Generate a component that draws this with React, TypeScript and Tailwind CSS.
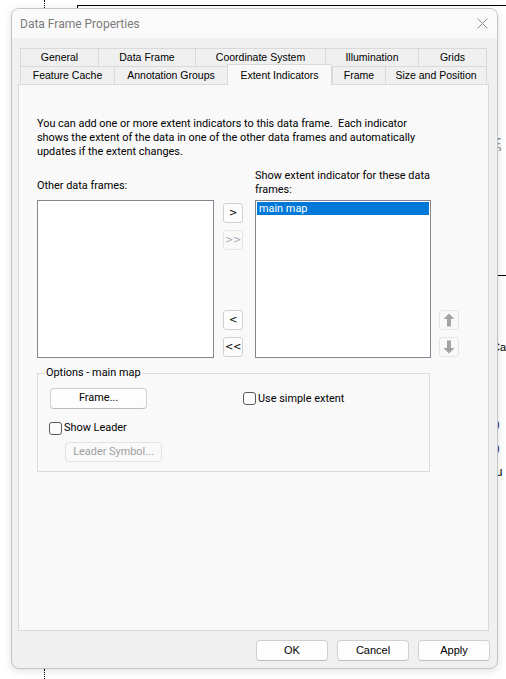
import React from "react";

const ui = "font-['Roboto',sans-serif] text-[10.9px]";
const ms = "font-['Liberation_Sans',Arial,sans-serif] text-[10.5px]";
const msb = "font-['Liberation_Sans',Arial,sans-serif] text-[11px]";

function Tab({ label, w, selected }: { label: string; w: number; selected?: boolean }) {
  if (selected) {
    return (
      <div
        className={`relative z-10 -mt-[2px] h-[21px] flex items-start justify-center pt-[3px] border-l border-r border-t border-[#d9d9d9] bg-[#f9f9f9] text-black ${ms}`}
        style={{ width: w }}
      >
        {label}
      </div>
    );
  }
  return (
    <div
      className={`h-[18px] flex items-center justify-center border-l border-t border-[#d9d9d9] bg-[#f0f0f0] text-black ${ms}`}
      style={{ width: w }}
    >
      {label}
    </div>
  );
}

function SmallBtn({ label, disabled }: { label: string; disabled?: boolean }) {
  return (
    <div
      className={`w-[20px] h-[20px] rounded-[3px] border flex items-center justify-center font-['DejaVu_Sans',sans-serif] text-[10px] ${
        disabled ? "border-[#e6e6e6] bg-[#f9f9f9] text-[#a8a8b8]" : "border-[#d0d0d0] bg-[#fdfdfd] text-black"
      }`}
    >
      <span className="leading-none -mt-[1px] tracking-[-0.5px]">{label}</span>
    </div>
  );
}

function ArrowBtn({ down }: { down?: boolean }) {
  return (
    <div className="w-[20px] h-[20px] rounded-[3px] border border-[#e6e6e6] bg-[#f9f9f9] flex items-center justify-center">
      <svg width="12" height="14" viewBox="0 0 12 14" className={down ? "rotate-180" : ""}>
        <path d="M6 0.5 L11.5 6 L8 6 L8 13.5 L4 13.5 L4 6 L0.5 6 Z" fill="#a3a3a3" />
      </svg>
    </div>
  );
}

function Check({ label }: { label: string }) {
  return (
    <div className="flex items-center gap-[2px]">
      <div className="w-[13px] h-[13px] rounded-[3px] border border-[#5a5a5a] bg-[#fbfbfb]" />
      <span className={`${ui} text-black leading-[14px]`}>{label}</span>
    </div>
  );
}

function PushBtn({ label, w, h, disabled, font }: { label: string; w: number; h: number; disabled?: boolean; font?: string }) {
  return (
    <div
      className={`rounded-[4px] border flex items-center justify-center ${font ?? ui} ${
        disabled
          ? "border-[#e3e3e3] bg-[#f9f9f9] text-[#a0a0a0]"
          : "border-[#d0d0d0] border-b-[#bcbcbc] bg-[#fdfdfd] text-black"
      }`}
      style={{ width: w, height: h }}
    >
      {label}
    </div>
  );
}

export default function App() {
  return (
    <div className="relative w-[506px] h-[679px] bg-white overflow-hidden pt-[8px] pl-[11px]">
      {/* background canvas fragments */}
      <div className="absolute left-[44px] top-0 h-[10px] border-l border-dotted border-black" />
      <div className="absolute left-[44px] top-[669px] h-[10px] border-l border-dotted border-black" />
      <div className="absolute left-[77px] top-[5px] w-[429px] h-[6px] border-l border-t border-black" />
      <div className="absolute left-[495px] top-[137px] text-[#8a8a8a] font-['DejaVu_Sans',sans-serif] text-[12px] leading-[14px]">ξ</div>
      <div className="absolute left-[490px] top-[275px] w-[16px] border-t border-black" />
      <div className="absolute left-[492px] top-[340px] text-black font-['Liberation_Sans',sans-serif] text-[11px] leading-[14px]">Ca</div>
      <div className="absolute left-[496px] top-[418px] text-[#1a1a3a] font-['Liberation_Sans',sans-serif] text-[11px] leading-[12px]">)</div>
      <div className="absolute left-[496px] top-[442px] text-[#1a1a3a] font-['Liberation_Sans',sans-serif] text-[11px] leading-[12px]">)</div>
      <div className="absolute left-[493px] top-[465px] text-black font-['Liberation_Sans',sans-serif] text-[12px] leading-[14px]">iu</div>

      {/* dialog window */}
      <div className="relative z-10 w-[487px] h-[661px] rounded-[8px] border border-[#c4c4c4] bg-[#f0f0f0] shadow-[0_2px_8px_rgba(0,0,0,0.12)] overflow-hidden flex flex-col">
        <div className="h-[29px] bg-[#fafafa] flex items-center justify-between pl-[8px] pr-[9px] shrink-0">
          <span className="font-['Roboto',sans-serif] text-[12px] text-[#7c7c7c]">Data Frame Properties</span>
          <svg width="11" height="11" viewBox="0 0 11 11">
            <path d="M0.5 0.5 L10.5 10.5 M10.5 0.5 L0.5 10.5" stroke="#8c8c8c" strokeWidth="1" />
          </svg>
        </div>
        <div className="flex-1 flex flex-col pl-[6px] pt-[10px]">
          {/* tabs */}
          <div className="ml-[2px] flex flex-col">
            <div className="flex">
              <Tab label="General" w={78} />
              <Tab label="Data Frame" w={97} />
              <Tab label="Coordinate System" w={130} />
              <Tab label="Illumination" w={93} />
              <div className="border-r border-[#d9d9d9]">
                <Tab label="Grids" w={68} />
              </div>
            </div>
            <div className="flex h-[18px]">
              <Tab label="Feature Cache" w={94} />
              <Tab label="Annotation Groups" w={113} />
              <Tab label="Extent Indicators" w={105} selected />
              <Tab label="Frame" w={53} />
              <div className="border-r border-[#d9d9d9]">
                <Tab label="Size and Position" w={101} />
              </div>
            </div>
          </div>
          {/* panel */}
          <div className="w-[471px] h-[547px] border border-[#d9d9d9] bg-[#f9f9f9] pl-[18px] pt-[32px] flex flex-col">
            <p className={`${ui} leading-[14px] text-black whitespace-pre`}>
              {"You can add one or more extent indicators to this data frame.  Each indicator\nshows the extent of the data in one of the other data frames and automatically\nupdates if the extent changes."}
            </p>
            <div className="flex items-start">
              <div className="w-[177px] mt-[20px] flex flex-col">
                <span className={`${ui} leading-[14px] text-black`}>Other data frames:</span>
                <div className="mt-[7px] h-[158px] border border-[#82878f] bg-white" />
              </div>
              <div className="ml-[9px] mt-[44px] flex flex-col">
                <SmallBtn label=">" />
                <div className="mt-[7px]">
                  <SmallBtn label=">>" disabled />
                </div>
                <div className="mt-[60px]">
                  <SmallBtn label="<" />
                </div>
                <div className="mt-[7px]">
                  <SmallBtn label="<<" />
                </div>
              </div>
              <div className="ml-[12px] w-[176px] mt-[10px] flex flex-col">
                <span className={`${ui} leading-[14px] text-black whitespace-nowrap`}>
                  Show extent indicator for these data
                  <br />
                  frames:
                </span>
                <div className="mt-[3px] h-[158px] border border-[#82878f] bg-white p-[1px]">
                  <div className={`h-[13px] bg-[#0078d7] text-white ${ui} leading-[13px] pl-[2px]`}>main map</div>
                </div>
              </div>
              <div className="ml-[8px] mt-[151px] flex flex-col gap-[7px]">
                <ArrowBtn />
                <ArrowBtn down />
              </div>
            </div>
            {/* group box */}
            <div className="relative mt-[15px] w-[393px] h-[99px] border border-[#dcdcdc] flex flex-col">
              <span className={`absolute left-[7px] -top-[8px] px-[1px] bg-[#f9f9f9] ${ui} leading-[14px] text-black`}>
                Options - main map
              </span>
              <div className="ml-[12px] mt-[14px] flex items-center">
                <PushBtn label="Frame..." w={97} h={21} />
                <div className="ml-[96px]">
                  <Check label="Use simple extent" />
                </div>
              </div>
              <div className="ml-[11px] mt-[12px]">
                <Check label="Show Leader" />
              </div>
              <div className="ml-[27px] mt-[7px]">
                <PushBtn label="Leader Symbol..." w={97} h={20} disabled />
              </div>
            </div>
          </div>
          {/* bottom buttons */}
          <div className="mt-[9px] flex justify-end gap-[9px] pr-[7px]">
            <PushBtn label="OK" w={72} h={21} font={msb} />
            <PushBtn label="Cancel" w={72} h={21} font={msb} />
            <PushBtn label="Apply" w={72} h={21} font={msb} />
          </div>
        </div>
      </div>
    </div>
  );
}
